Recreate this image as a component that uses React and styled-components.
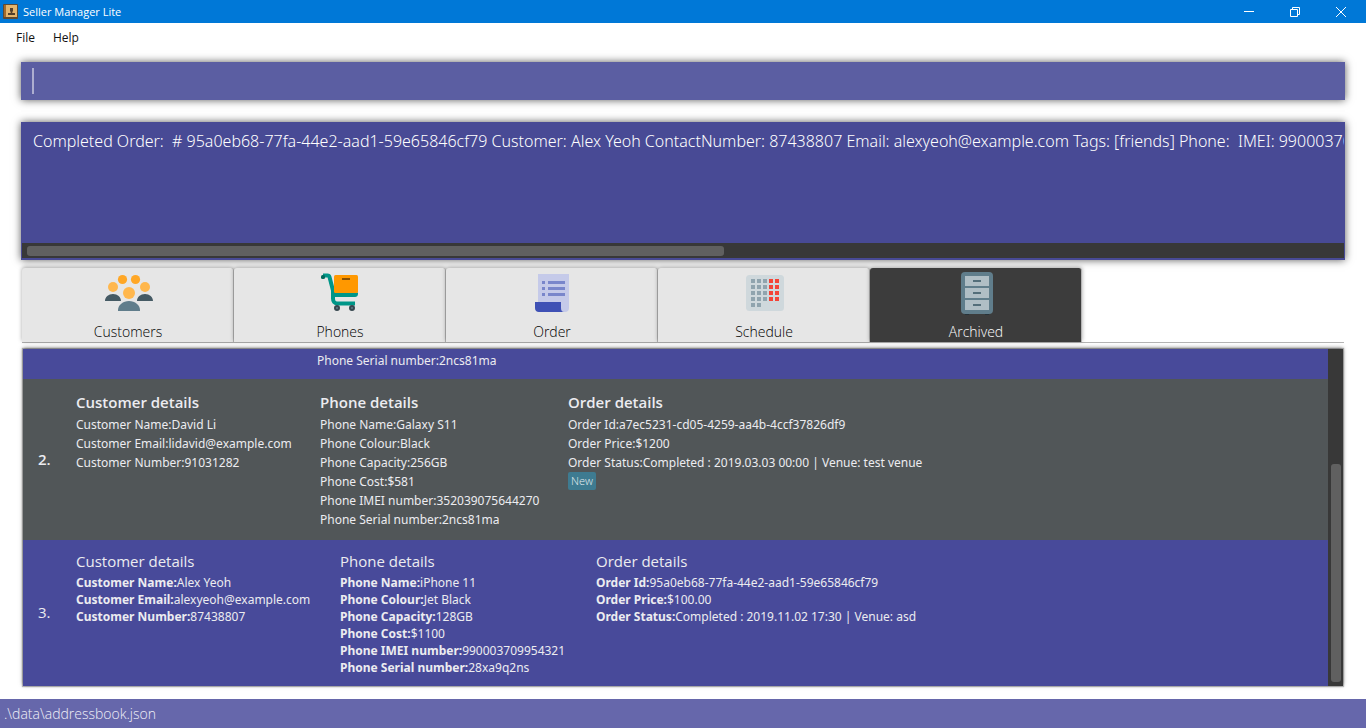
import React from 'react';
import styled, { createGlobalStyle } from 'styled-components';

const Global = createGlobalStyle`
  *, *::before, *::after { box-sizing: border-box; }
  body {
    margin: 0;
    background: #fff;
    font-family: "Open Sans", "Noto Sans", sans-serif;
    font-size: 13px;
  }
  button, input, textarea { font: inherit; color: inherit; border: 0; padding: 0; margin: 0; background: none; outline: none; }
`;

const Window = styled.div`
  display: flex;
  flex-direction: column;
  min-height: 100vh;
`;

const TitleBar = styled.header`
  display: flex;
  align-items: center;
  height: 23px;
  padding-left: 3px;
  background: #0078d7;
  color: #fff;
`;

const Title = styled.h1`
  flex: 1;
  margin: 0 0 0 5px;
  font-size: 11px;
  font-weight: 400;
  line-height: 22px;
`;

const WindowButton = styled.button`
  display: flex;
  align-items: center;
  justify-content: center;
  width: 46px;
  height: 21px;
  &:last-child { margin-right: 2px; }
`;

const MenuBar = styled.nav`
  display: flex;
  gap: 18px;
  padding: 4px 16px;
  height: 29px;
`;

const MenuButton = styled.button`
  font-size: 12px;
  line-height: 20px;
  color: #111;
`;

const Main = styled.main`
  flex: 1;
  display: flex;
  flex-direction: column;
  padding: 10px 21px 13px;
`;

const Panel = styled.div`
  box-shadow: 0 0 8px rgba(0, 0, 0, 0.65);
`;

const CommandBox = styled(Panel)`
  display: flex;
  align-items: center;
  height: 38px;
  padding-left: 11px;
  background: #5b5ea2;
`;

const Caret = styled.span`
  width: 2px;
  height: 26px;
  background: #adaed0;
`;

const CommandInput = styled.input`
  flex: 1;
  height: 100%;
  color: #fff;
  font-size: 16px;
`;

const ResultBox = styled(Panel)`
  display: flex;
  flex-direction: column;
  margin-top: 22px;
  padding: 0 1px 2px;
  height: 138px;
  background: #484a95;
`;

const ResultText = styled.textarea`
  flex: 1;
  padding: 7px 0 0 11px;
  resize: none;
  overflow: hidden;
  white-space: pre;
  color: #fff;
  font-family: "Noto Sans", "Open Sans", sans-serif;
  font-size: 16px;
  font-weight: 300;
  line-height: 24px;
`;

const HTrack = styled.div`
  height: 15px;
  padding: 3px 5px 2px;
  background: #383838;
`;

const HThumb = styled.div`
  width: 53.1%;
  height: 10px;
  border-radius: 3px;
  background: #606060;
`;

const TabBar = styled.div`
  display: flex;
  height: 76px;
  margin: 7px 1px 0;
  padding-top: 1px;
  border-bottom: 1px solid #b4b4b4;
`;

const Tab = styled.button`
  display: flex;
  flex-direction: column;
  align-items: center;
  width: 212px;
  padding: 1px 0 0 1px;
  border-right: 1px solid #b4b4b4;
  border-radius: 3px 3px 0 0;
  background: ${(p) => (p.$active ? '#3c3c3c' : '#e6e6e6')};
  color: ${(p) => (p.$active ? '#fff' : '#000')};
  box-shadow: 0 -1px 4px rgba(0, 0, 0, 0.35);
  font-size: 14px;
  font-weight: 300;
  line-height: 20px;
  svg { margin-bottom: 5px; overflow: visible; }
`;

const ListPanel = styled(Panel)`
  flex: 1;
  display: flex;
  margin: 6px 2px 0;
  box-shadow: 0 -1px 4px rgba(0, 0, 0, 0.5), 0 0 1px 1px #c0c0c0;
`;

const Orders = styled.ul`
  flex: 1;
  display: flex;
  flex-direction: column;
  min-width: 0;
  margin: 0;
  padding: 0;
  list-style: none;
  color: #ececf0;
`;

const Row = styled.li`
  display: grid;
  grid-template-columns: 53px ${(p) => p.$columns} 1fr;
  padding: ${(p) => p.$padding};
  background: ${(p) => (p.$grey ? '#515658' : '#484a9a')};
  ${(p) => p.$last && 'flex: 1;'}
`;

const Index = styled.span`
  align-self: center;
  padding: 0 0 3px 15px;
  font-size: 15px;
  font-weight: ${(p) => (p.$strong ? 600 : 500)};
`;

const Heading = styled.h2`
  margin: 0 0 2px;
  font-size: 15px;
  font-weight: ${(p) => (p.$strong ? 600 : 500)};
  line-height: 22px;
`;

const Fields = styled.dl`
  margin: 0;
  font-family: "Noto Sans", "Open Sans", sans-serif;
  line-height: ${(p) => (p.$compact ? 17 : 19)}px;
  white-space: nowrap;
  dt { font-weight: ${(p) => (p.$compact ? 700 : 400)}; }
`;

const Field = styled.div`
  display: flex;
  font-size: 12px;
  dd { margin: 0; }
`;

const Tag = styled.span`
  display: inline-block;
  padding: 0 3px;
  border-radius: 2px;
  background: #3e7b91;
  color: #e4eef2;
  font-size: 11px;
  font-weight: 300;
  line-height: 18px;
`;

const Tags = styled.div`
  display: flex;
  height: 18px;
`;

const VTrack = styled.div`
  display: flex;
  flex-direction: column;
  justify-content: flex-end;
  width: 15px;
  padding: 4px 2px 4px 3px;
  background: #383838;
`;

const VThumb = styled.div`
  height: 66.3%;
  border-radius: 3px;
  background: #606060;
`;

const StatusBar = styled.footer`
  height: 29px;
  padding-left: 4px;
  background: #6667ab;
  color: #f0f0f8;
  font-size: 14px;
  font-weight: 300;
  line-height: 29px;
`;

const AppIcon = () => (
  <svg width="15" height="15" viewBox="0 0 15 15" aria-hidden="true">
    <rect x="0" y="0" width="15" height="15" rx="1" fill="#5e4a33" />
    <rect x="1" y="1" width="2" height="12" fill="#a36b2c" />
    <rect x="3" y="1" width="11" height="12" fill="#e3b56d" />
    <path d="M7 4h3v3l-.7 1v1H12v2H5V9h2.700V8L7 7z" fill="#54402c" />
  </svg>
);

const CustomersIcon = () => (
  <svg width="48" height="48" viewBox="0 0 48 48" aria-hidden="true">
    <g fill="#ffa726"><circle cx="18.500" cy="10.500" r="4.600" /><circle cx="31.500" cy="10.500" r="4.600" /></g>
    <g fill="#ffb74d"><circle cx="9" cy="18" r="5" /><circle cx="41" cy="18" r="5" /><circle cx="25" cy="24" r="6" /></g>
    <path d="M1 32c0-4 3.500-7 8-7s8 3 8 7zM33 32c0-4 3.500-7 8-7s8 3 8 7z" fill="#455a64" />
    <path d="M14 42v-1c0-5 5-9 11-9s11 4 11 9v1z" fill="#607d8b" />
  </svg>
);

const PhonesIcon = () => (
  <svg width="48" height="48" viewBox="0 0 48 48" aria-hidden="true">
    <path d="M18 23.500h24v1.500c0 2-1.300 3-3 3H18z" fill="#009688" />
    <path d="M7 8h4.500c1 0 1.700.4 2 1.500L17 23v8c0 3 1.500 5 4 5H39" fill="none" stroke="#009688" strokeWidth="4" strokeLinecap="butt" strokeLinejoin="round" transform="translate(0 -1.500)" />
    <rect x="5" y="6" width="4" height="4" rx="1.500" fill="#00695c" />
    <rect x="18" y="6" width="24" height="18" rx="1.500" fill="#ff9800" />
    <rect x="26" y="9" width="8" height="2" fill="#8a5000" />
    <g fill="#607d8b" stroke="#37474f" strokeWidth="2"><circle cx="21" cy="39" r="2" /><circle cx="36" cy="39" r="2" /></g>
  </svg>
);

const OrderIcon = () => (
  <svg width="48" height="48" viewBox="0 0 48 48" aria-hidden="true">
    <path d="M10 5h31v34c0 2.500-1.500 4-4 4H10z" fill="#c5cae9" />
    <path d="M7 33h26v6c0 2.500 1.200 4 3 4H11c-2.500 0-4-1.500-4-4z" fill="#3f51b5" />
    <g fill="#7986cb">
      {[12, 18, 24].map((y) => (
        <React.Fragment key={y}>
          <rect x="14" y={y} width="3" height="3" />
          <rect x="20" y={y} width="17" height="3" />
        </React.Fragment>
      ))}
    </g>
  </svg>
);

const days = [0, 1, 2, 3, 4].flatMap((r) => [0, 1, 2, 3, 4].map((c) => [r, c])).filter(([r, c]) => r < 4 || c < 2);

const ScheduleIcon = () => (
  <svg width="48" height="48" viewBox="0 0 48 48" aria-hidden="true">
    <rect x="6" y="6" width="38" height="36" rx="3.500" fill="#cfd8dc" />
    {days.map(([r, c]) => (
      <rect key={`${r}${c}`} x={11 + c * 6} y={10 + r * 6} width="4" height="4" fill={c > 2 ? '#f44336' : '#90a4ae'} />
    ))}
  </svg>
);

const ArchivedIcon = () => (
  <svg width="48" height="48" viewBox="0 0 48 48" aria-hidden="true">
    <path d="M13 45h4v1h-4zM33 45h4v1h-4z" fill="#263238" />
    <rect x="9" y="3" width="32" height="42" rx="4" fill="#607d8b" />
    {[7, 19, 31].map((y) => (
      <React.Fragment key={y}>
        <rect x="13" y={y} width="24" height="10" fill="#b0bec5" />
        <rect x="21" y={y + 4} width="8" height="2" fill="#546e7a" />
      </React.Fragment>
    ))}
  </svg>
);

const tabs = [
  ['Customers', CustomersIcon],
  ['Phones', PhonesIcon],
  ['Order', OrderIcon],
  ['Schedule', ScheduleIcon],
  ['Archived', ArchivedIcon],
];

const orders = [
  {
    index: '2.',
    grey: true,
    columns: '244px 248px',
    padding: '12px 0 11px',
    groups: [
      ['Customer details', [['Customer Name:', 'David Li'], ['Customer Email:', 'lidavid@example.com'], ['Customer Number:', '91031282']]],
      ['Phone details', [['Phone Name:', 'Galaxy S11'], ['Phone Colour:', 'Black'], ['Phone Capacity:', '256GB'], ['Phone Cost:', '$581'], ['Phone IMEI number:', '352039075644270'], ['Phone Serial number:', '2ncs81ma']]],
      ['Order details', [['Order Id:', 'a7ec5231-cd05-4259-aa4b-4ccf37826df9'], ['Order Price:', '$1200'], ['Order Status:', 'Completed : 2019.03.03 00:00 | Venue: test venue']], ['New']],
    ],
  },
  {
    index: '3.',
    compact: true,
    columns: '264px 256px',
    padding: '10px 0',
    groups: [
      ['Customer details', [['Customer Name:', 'Alex Yeoh'], ['Customer Email:', 'alexyeoh@example.com'], ['Customer Number:', '87438807']]],
      ['Phone details', [['Phone Name:', 'iPhone 11'], ['Phone Colour:', 'Jet Black'], ['Phone Capacity:', '128GB'], ['Phone Cost:', '$1100'], ['Phone IMEI number:', '990003709954321'], ['Phone Serial number:', '28xa9q2ns']]],
      ['Order details', [['Order Id:', '95a0eb68-77fa-44e2-aad1-59e65846cf79'], ['Order Price:', '$100.00'], ['Order Status:', 'Completed : 2019.11.02 17:30 | Venue: asd']]],
    ],
  },
];

const result =
  'Completed Order:  # 95a0eb68-77fa-44e2-aad1-59e65846cf79 Customer: Alex Yeoh ContactNumber: 87438807 Email: alexyeoh@example.com Tags: [friends] Phone:  IMEI: 990003709954321';

const FieldList = ({ fields, compact }) => (
  <Fields $compact={compact}>
    {fields.map(([label, value]) => (
      <Field key={label}>
        <dt>{label}</dt>
        <dd>{value}</dd>
      </Field>
    ))}
  </Fields>
);

export default function App() {
  return (
    <Window>
      <Global />
      <TitleBar>
        <AppIcon />
        <Title>Seller Manager Lite</Title>
        <WindowButton aria-label="Minimize">
          <svg width="10" height="10" viewBox="0 0 10 10"><path d="M0 4.500h10" stroke="#fff" /></svg>
        </WindowButton>
        <WindowButton aria-label="Restore">
          <svg width="10" height="10" viewBox="0 0 10 10" fill="none" stroke="#fff"><path d="M.5 2.500h7v7h-7zM2.500 2.500v-2h7v7h-2" /></svg>
        </WindowButton>
        <WindowButton aria-label="Close">
          <svg width="10" height="10" viewBox="0 0 10 10"><path d="M0 0l10 10M10 0L0 10" stroke="#fff" /></svg>
        </WindowButton>
      </TitleBar>
      <MenuBar>
        <MenuButton>File</MenuButton>
        <MenuButton>Help</MenuButton>
      </MenuBar>
      <Main>
        <CommandBox>
          <Caret />
          <CommandInput type="text" aria-label="Command" />
        </CommandBox>
        <ResultBox>
          <ResultText readOnly wrap="off" aria-label="Result" value={result} />
          <HTrack><HThumb /></HTrack>
        </ResultBox>
        <TabBar role="tablist">
          {tabs.map(([name, Icon]) => (
            <Tab key={name} role="tab" aria-selected={name === 'Archived'} $active={name === 'Archived'}>
              <Icon />
              {name}
            </Tab>
          ))}
        </TabBar>
        <ListPanel>
          <Orders>
            <Row $columns="241px 248px" $padding="2px 0 9px">
              <span />
              <span />
              <FieldList fields={[['Phone Serial number:', '2ncs81ma']]} />
            </Row>
            {orders.map((o) => (
              <Row key={o.index} $columns={o.columns} $padding={o.padding} $grey={o.grey} $last={o.compact}>
                <Index $strong={o.grey}>{o.index}</Index>
                {o.groups.map(([heading, fields, tags]) => (
                  <section key={heading}>
                    <Heading $strong={o.grey}>{heading}</Heading>
                    <FieldList fields={fields} compact={o.compact} />
                    {tags && <Tags>{tags.map((t) => <Tag key={t}>{t}</Tag>)}</Tags>}
                  </section>
                ))}
              </Row>
            ))}
          </Orders>
          <VTrack><VThumb /></VTrack>
        </ListPanel>
      </Main>
      <StatusBar>.\data\addressbook.json</StatusBar>
    </Window>
  );
}
